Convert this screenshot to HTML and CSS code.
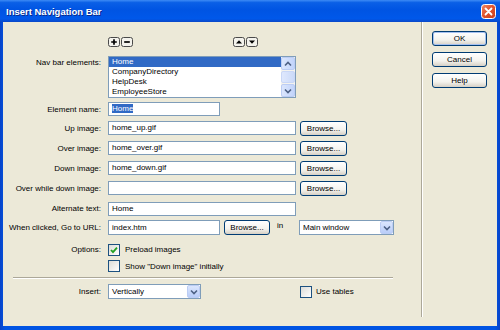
FILE: index.html
```html
<!DOCTYPE html>
<html lang="en">
<head>
    <meta charset="UTF-8">
    <title>Insert Navigation Bar</title>
    <link rel="stylesheet" href="styles.css">
</head>
<body>
    <div class="window">
        <div class="titlebar">
            <span class="title">Insert Navigation Bar</span>
            <svg class="close" width="15" height="15" viewBox="0 0 15 15">
                <defs>
                    <linearGradient id="red" x1="0" y1="0" x2="1" y2="1">
                        <stop offset="0" stop-color="#f08a66"/>
                        <stop offset="0.5" stop-color="#e0512a"/>
                        <stop offset="1" stop-color="#c8401c"/>
                    </linearGradient>
                </defs>
                <rect x="0.5" y="0.5" width="14" height="14" rx="3" fill="url(#red)" stroke="#fff"/>
                <path d="M4.5 4.5l6 6M10.5 4.5l-6 6" stroke="#fff" stroke-width="1.8" stroke-linecap="round"/>
            </svg>
        </div>

        <div class="client">
            <div class="form">
                <div class="row row-tools">
                    <span class="label"></span>
                    <div class="tools">
                        <svg width="12" height="10" viewBox="0 0 12 10">
                            <rect x="0.5" y="0.5" width="11" height="9" rx="2" fill="#f3f2ec" stroke="#4a4a4a"/>
                            <path d="M6 2.2v5.6M3.2 5h5.6" stroke="#000" stroke-width="1.7"/>
                        </svg>
                        <svg width="12" height="10" viewBox="0 0 12 10">
                            <rect x="0.5" y="0.5" width="11" height="9" rx="2" fill="#f3f2ec" stroke="#4a4a4a"/>
                            <path d="M3.2 5h5.6" stroke="#000" stroke-width="1.7"/>
                        </svg>
                        <span class="move">
                            <svg width="12" height="10" viewBox="0 0 12 10">
                                <rect x="0.5" y="0.5" width="11" height="9" rx="2" fill="#f3f2ec" stroke="#4a4a4a"/>
                                <path d="M3 6.6L6 3.2L9 6.6Z" fill="#000"/>
                            </svg>
                            <svg width="12" height="10" viewBox="0 0 12 10">
                                <rect x="0.5" y="0.5" width="11" height="9" rx="2" fill="#f3f2ec" stroke="#4a4a4a"/>
                                <path d="M3 3.4L6 6.8L9 3.4Z" fill="#000"/>
                            </svg>
                        </span>
                    </div>
                </div>

                <div class="row row-list">
                    <span class="label">Nav bar elements:</span>
                    <div class="listbox">
                        <ul class="items">
                            <li class="selected">Home</li>
                            <li>CompanyDirectory</li>
                            <li>HelpDesk</li>
                            <li>EmployeeStore</li>
                        </ul>
                        <div class="scrollbar">
                            <span class="sb-btn">
                                <svg width="8" height="6" viewBox="0 0 8 6"><path d="M1 4.5L4 1.5L7 4.5" fill="none" stroke="#4d6185" stroke-width="1.6"/></svg>
                            </span>
                            <span class="sb-thumb"></span>
                            <span class="sb-btn">
                                <svg width="8" height="6" viewBox="0 0 8 6"><path d="M1 1.5L4 4.5L7 1.5" fill="none" stroke="#4d6185" stroke-width="1.6"/></svg>
                            </span>
                        </div>
                    </div>
                </div>

                <div class="row row-name">
                    <span class="label">Element name:</span>
                    <div class="field short"><span class="sel">Home</span></div>
                </div>

                <div class="row">
                    <span class="label">Up image:</span>
                    <div class="field">home_up.gif</div>
                    <button class="btn browse">Browse...</button>
                </div>

                <div class="row">
                    <span class="label">Over image:</span>
                    <div class="field">home_over.gif</div>
                    <button class="btn browse">Browse...</button>
                </div>

                <div class="row">
                    <span class="label">Down image:</span>
                    <div class="field">home_down.gif</div>
                    <button class="btn browse">Browse...</button>
                </div>

                <div class="row">
                    <span class="label">Over while down image:</span>
                    <div class="field"></div>
                    <button class="btn browse">Browse...</button>
                </div>

                <div class="row row-alt">
                    <span class="label">Alternate text:</span>
                    <div class="field">Home</div>
                </div>

                <div class="row row-url">
                    <span class="label">When clicked, Go to URL:</span>
                    <div class="field short">index.htm</div>
                    <button class="btn browse">Browse...</button>
                    <span class="in">in</span>
                    <div class="select target">
                        <span>Main window</span>
                        <span class="drop"><svg width="8" height="6" viewBox="0 0 8 6"><path d="M1 1.5L4 4.5L7 1.5" fill="none" stroke="#4d6185" stroke-width="1.6"/></svg></span>
                    </div>
                </div>

                <div class="row row-preload">
                    <span class="label">Options:</span>
                    <span class="check checked">
                        <svg width="10" height="10" viewBox="0 0 10 10"><path d="M2 5l2 2.2L8 2.6" fill="none" stroke="#21a121" stroke-width="1.8"/></svg>
                    </span>
                    <span class="check-label">Preload images</span>
                </div>

                <div class="row row-show">
                    <span class="label"></span>
                    <span class="check"></span>
                    <span class="check-label">Show "Down image" initially</span>
                </div>

                <div class="separator"></div>

                <div class="row row-insert">
                    <span class="label">Insert:</span>
                    <div class="select insert">
                        <span>Vertically</span>
                        <span class="drop"><svg width="8" height="6" viewBox="0 0 8 6"><path d="M1 1.5L4 4.5L7 1.5" fill="none" stroke="#4d6185" stroke-width="1.6"/></svg></span>
                    </div>
                    <span class="check tables"></span>
                    <span class="check-label">Use tables</span>
                </div>
            </div>

            <div class="actions">
                <button class="btn action default">OK</button>
                <button class="btn action">Cancel</button>
                <button class="btn action">Help</button>
            </div>
        </div>
    </div>
</body>
</html>
```

FILE: styles.css
```css
body {
    margin: 0;
    font-family: "Liberation Sans", Arial, sans-serif;
    font-size: 8px;
    color: #000;
    background-color: #fff;
}
.window {
    width: 500px;
    height: 330px;
    display: flex;
    flex-direction: column;
    background: linear-gradient(90deg, #0843c8 0%, #0054e3 1%, #0054e3 99%, #0843c8 100%);
}
.titlebar {
    height: 22px;
    display: flex;
    align-items: center;
    justify-content: space-between;
    padding: 0 4px 0 6px;
    background: linear-gradient(#3d8bf5 0%, #0a5fe6 12%, #0054e3 45%, #0058ea 85%, #0a48c8 100%);
}
.title {
    color: #fff;
    font-weight: bold;
    font-size: 9.5px;
    text-shadow: 1px 1px 0 #0a2a8a;
}
.close {
    display: block;
}
.client {
    margin: 0 3px 4px 3px;
    height: 304px;
    display: flex;
    background-color: #ece9d8;
}
.form {
    width: 419px;
    height: 295px;
    padding-top: 15px;
    box-sizing: border-box;
    border-right: 1px solid #aca899;
    box-shadow: 1px 0 0 #fff;
}
.row {
    display: flex;
    align-items: center;
    height: 20px;
}
.label {
    width: 105px;
    flex-shrink: 0;
    padding-right: 7px;
    box-sizing: border-box;
    text-align: right;
}
.row-tools {
    height: 11px;
    align-items: flex-start;
}
.tools {
    display: flex;
    gap: 1px;
}
.tools svg {
    display: block;
}
.move {
    display: flex;
    gap: 1px;
    margin-left: 99px;
}
.row-list {
    margin-top: 8px;
    height: 42px;
    align-items: flex-start;
}
.row-list .label {
    padding-top: 2px;
}
.listbox {
    width: 188px;
    height: 42px;
    box-sizing: border-box;
    border: 1px solid #7f9db9;
    background-color: #fff;
    display: flex;
}
.items {
    list-style: none;
    margin: 0;
    padding: 0;
    flex: 1;
}
.items li {
    height: 10px;
    line-height: 10px;
    padding-left: 3px;
}
.items li.selected {
    background-color: #316ac5;
    color: #fff;
}
.scrollbar {
    width: 14px;
    display: flex;
    flex-direction: column;
    background-color: #f4f3ee;
}
.sb-btn {
    height: 13px;
    display: flex;
    align-items: center;
    justify-content: center;
    box-sizing: border-box;
    border: 1px solid #bccdf4;
    border-radius: 2px;
    background: linear-gradient(90deg, #dbe6fd, #c2d4fb);
}
.sb-thumb {
    flex: 1;
    margin: 1px 0;
    border: 1px solid #c9d7f7;
    border-radius: 2px;
    background: linear-gradient(90deg, #dfe8fd, #cbdaf9);
}
.row-name {
    margin-top: 2px;
    height: 18px;
}
.row-alt {
    height: 21px;
}
.row-url {
    height: 17px;
}
.field {
    width: 188px;
    height: 14px;
    line-height: 12px;
    box-sizing: border-box;
    border: 1px solid #7f9db9;
    background-color: #fff;
    padding-left: 3px;
    white-space: nowrap;
}
.field.short {
    width: 112px;
}
.row-url .field {
    height: 15px;
    line-height: 13px;
}
.sel {
    background-color: #316ac5;
    color: #fff;
}
.btn {
    font-family: "Liberation Sans", Arial, sans-serif;
    font-size: 8px;
    color: #000;
    height: 15px;
    padding: 0;
    box-sizing: border-box;
    border: 1px solid #003c74;
    border-radius: 3px;
    background: linear-gradient(#ffffff 0%, #f4f3ee 60%, #d6d0c5 100%);
}
.browse {
    width: 47px;
    margin-left: 4px;
}
.row-url .browse {
    width: 46px;
}
.in {
    width: 29px;
    padding-left: 7px;
    box-sizing: border-box;
    margin-top: -4px;
}
.select {
    height: 15px;
    box-sizing: border-box;
    border: 1px solid #7f9db9;
    background-color: #fff;
    display: flex;
    align-items: center;
    justify-content: space-between;
    padding-left: 3px;
}
.select.target {
    width: 95px;
}
.select.insert {
    width: 93px;
}
.drop {
    width: 13px;
    height: 13px;
    display: flex;
    align-items: center;
    justify-content: center;
    box-sizing: border-box;
    border: 1px solid #bccdf4;
    border-radius: 2px;
    background: linear-gradient(#dbe6fd, #b9cdf9);
}
.drop svg, .sb-btn svg {
    display: block;
}
.row-preload {
    margin-top: 5px;
    height: 17px;
}
.row-show {
    height: 16px;
}
.check {
    width: 12px;
    height: 12px;
    box-sizing: border-box;
    border: 1px solid #1c5180;
    background: linear-gradient(135deg, #dcdcd7, #ffffff);
    display: flex;
    align-items: center;
    justify-content: center;
}
.check svg {
    display: block;
}
.check-label {
    margin-left: 5px;
}
.tables {
    margin-left: 99px;
}
.row-insert .check-label {
    margin-left: 4px;
}
.separator {
    margin: 3px 0 0 10px;
    width: 380px;
    border-top: 1px solid #aca899;
    border-bottom: 1px solid #fff;
}
.row-insert {
    margin-top: 3px;
    height: 19px;
}
.actions {
    padding: 9px 0 0 10px;
    display: flex;
    flex-direction: column;
    gap: 6px;
}
.action {
    width: 55px;
}
.action.default {
    box-shadow: inset 0 0 0 1px #a6c1f0;
}
```
